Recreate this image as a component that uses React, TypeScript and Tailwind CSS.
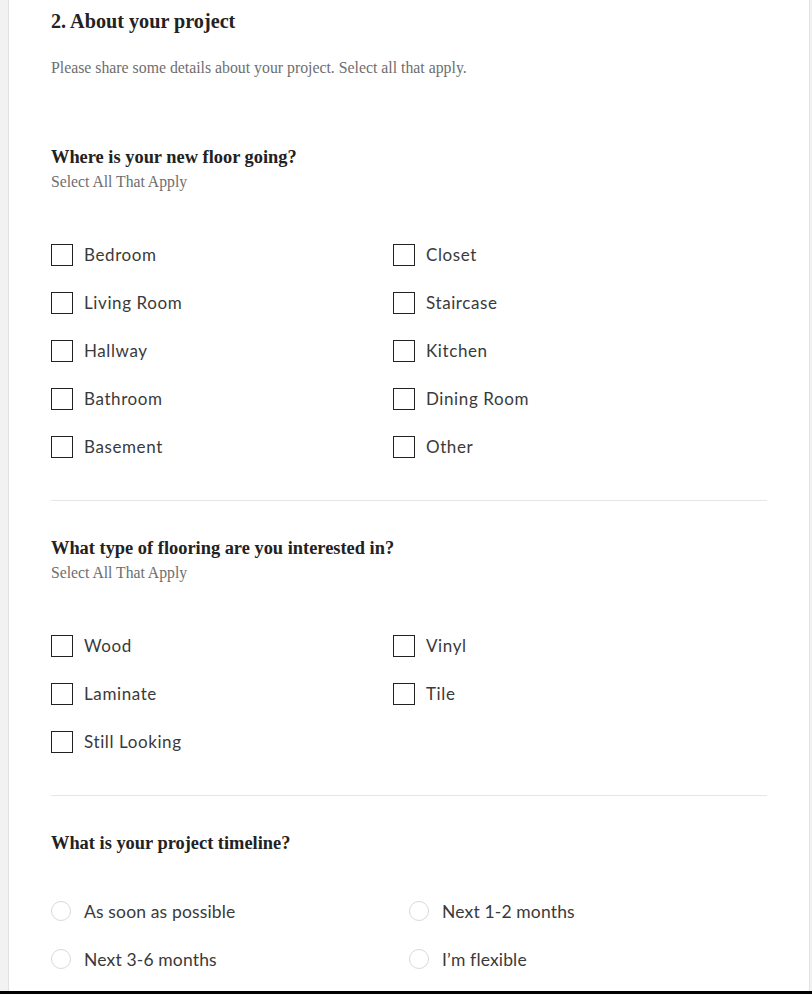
const serif = { fontFamily: '"Liberation Serif", "Times New Roman", serif' };

type Option = { label: string };

const floorOptions = [
  "Bedroom",
  "Closet",
  "Living Room",
  "Staircase",
  "Hallway",
  "Kitchen",
  "Bathroom",
  "Dining Room",
  "Basement",
  "Other",
];

const flooringOptions = ["Wood", "Vinyl", "Laminate", "Tile", "Still Looking"];

const timelineOptions = [
  "As soon as possible",
  "Next 1-2 months",
  "Next 3-6 months",
  "I’m flexible",
];

const Checkbox = ({ label }: Option) => (
  <label className="flex h-12 items-center gap-[11px] cursor-pointer">
    <span className="block h-[22px] w-[22px] shrink-0 border-[1.5px] border-[#222] bg-white" />
    <span className="font-['Lato',sans-serif] text-[17px] tracking-[0.6px] text-[#3a3a3a]">
      {label}
    </span>
  </label>
);

const Radio = ({ label }: Option) => (
  <label className="flex h-12 items-center gap-[13px] cursor-pointer">
    <span className="block h-5 w-5 shrink-0 rounded-full border border-[#d9d9d9] bg-white" />
    <span className="mt-[2px] font-['Lato',sans-serif] text-[17.5px] tracking-[0.15px] text-[#3a3a3a]">
      {label}
    </span>
  </label>
);

const Question = ({ title, sub }: { title: string; sub?: string }) => (
  <div>
    <h3 style={serif} className="text-[18.4px] font-bold leading-5 text-[#222]">
      {title}
    </h3>
    {sub && (
      <p style={serif} className="mt-[5px] text-[15.7px] leading-5 text-[#6e6e6e]">
        {sub}
      </p>
    )}
  </div>
);

export default function App() {
  return (
    <div className="flex h-[994px] flex-col overflow-hidden bg-[#f2f2f2]">
      <div className="ml-[8px] mr-[2px] flex-1 border-x border-[#e2e2e2] bg-white px-[42px]">
        <h2 style={serif} className="mt-[9px] text-[20.2px] font-bold leading-6 text-[#222]">
          2. About your project
        </h2>
        <p style={serif} className="mt-[25px] text-[15.8px] leading-5 text-[#6e6e6e]">
          Please share some details about your project. Select all that apply.
        </p>

        <div className="mt-[69px]">
          <Question title="Where is your new floor going?" sub="Select All That Apply" />
        </div>
        <div className="mt-[39px] grid grid-cols-[342px_1fr]">
          {floorOptions.map((o) => (
            <Checkbox key={o} label={o} />
          ))}
        </div>

        <div className="mt-[29px] border-t border-[#e6e6e6]" />

        <div className="mt-[37px]">
          <Question title="What type of flooring are you interested in?" sub="Select All That Apply" />
        </div>
        <div className="mt-[39px] grid grid-cols-[342px_1fr]">
          {flooringOptions.map((o) => (
            <Checkbox key={o} label={o} />
          ))}
        </div>

        <div className="mt-[29px] border-t border-[#e6e6e6]" />

        <div className="mt-[37px]">
          <Question title="What is your project timeline?" />
        </div>
        <div className="mt-[34px] grid grid-cols-2">
          {timelineOptions.map((o) => (
            <Radio key={o} label={o} />
          ))}
        </div>
      </div>
      <div className="h-[3px] shrink-0 bg-black" />
    </div>
  );
}
